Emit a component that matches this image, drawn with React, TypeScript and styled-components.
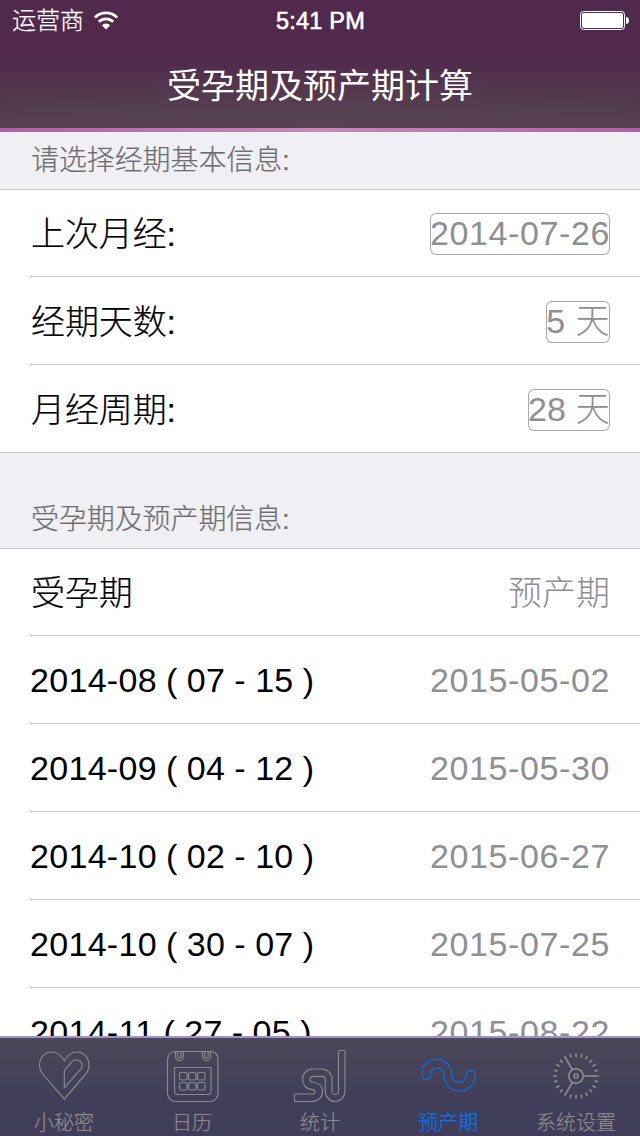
import type { ReactNode } from 'react'
import styled, { createGlobalStyle } from 'styled-components'

const GlobalStyle = createGlobalStyle`
    * {
        box-sizing: border-box;
    }

    body {
        margin: 0;
        background: #fff;
        font-family: 'Liberation Sans', 'Noto Sans CJK SC', sans-serif;
    }
`

const Screen = styled.div`
    width: 640px;
    height: 1136px;
    display: flex;
    flex-direction: column;
    overflow: hidden;
    background: #efeff4;
`

const Header = styled.header`
    flex: none;
    height: 128px;
    color: #fff;
    background:
        radial-gradient(ellipse 420px 60px at 50% 100%, rgba(92, 72, 82, 0.55), rgba(92, 72, 82, 0)),
        linear-gradient(#51294d 0%, #51294d 40%, #53404f 100%);
`

const Stripe = styled.div`
    flex: none;
    height: 4px;
    background: linear-gradient(90deg, #b05fa8, #c888bb 50%, #b05fa8);
`

const StatusBar = styled.div`
    height: 40px;
    padding: 0 11px 0 12px;
    display: grid;
    grid-template-columns: 1fr auto 1fr;
    align-items: center;
`

const Carrier = styled.div`
    display: flex;
    align-items: center;
    gap: 9px;
    font-size: 24px;
    font-weight: 300;
    line-height: 40px;
    -webkit-text-stroke: 0.25px #fff;
`

const Clock = styled.div`
    font-size: 23.5px;
    line-height: 40px;
    letter-spacing: 0.2px;
    padding-top: 1px;
    -webkit-text-stroke: 0.6px #fff;
`

const Battery = styled.svg`
    justify-self: end;
`

const Title = styled.h1`
    margin: 0;
    height: 88px;
    padding-top: 2px;
    font-size: 34px;
    font-weight: 400;
    line-height: 88px;
    text-align: center;
`

const List = styled.main`
    flex: 1;
    min-height: 0;
    overflow: hidden;
`

const SectionHeader = styled.h2<{ $height: number }>`
    margin: 0;
    height: ${({ $height }) => $height}px;
    padding: 0 31px 8px;
    display: flex;
    align-items: flex-end;
    border-bottom: 1px solid #c8c7cc;
    color: #6d6d72;
    font-size: 28px;
    font-weight: 300;
    line-height: 40px;
    letter-spacing: -0.1px;
    -webkit-text-stroke: 0.2px #6d6d72;
`

const Rows = styled.div`
    background: #fff;
    padding-left: 30px;
`

const Row = styled.div<{ $chinese?: boolean }>`
    height: 88px;
    padding-top: ${({ $chinese }) => ($chinese ? 2 : 0)}px;
    padding-right: 30px;
    display: flex;
    align-items: center;
    justify-content: space-between;
    border-bottom: 1px solid #c8c7cc;
    font-size: 34px;
    font-weight: 300;
    line-height: 40px;
    white-space: pre;

    &:first-child {
        height: 87px;
    }

    &:last-child {
        margin-left: -30px;
        padding-left: 30px;
    }
`

const Label = styled.span<{ $dates?: boolean }>`
    color: #000;
    padding-left: ${({ $dates }) => ($dates ? 0 : 1)}px;
    letter-spacing: ${({ $dates }) => ($dates ? '0.3px' : '-0.1px')};
    word-spacing: ${({ $dates }) => ($dates ? '-0.6px' : '0')};
    -webkit-text-stroke: ${({ $dates }) => ($dates ? '0' : '0.2px #000')};
`

const Value = styled.span<{ $tracking?: number }>`
    color: #8e8e93;
    letter-spacing: ${({ $tracking = 0.6 }) => $tracking}px;
`

// The outline is drawn inside the box so that it hugs the text
const Field = styled(Value)`
    height: 42px;
    border-radius: 6px;
    box-shadow: inset 0 0 0 1px #a9a9a9;
`

const TabBar = styled.nav`
    flex: none;
    height: 100px;
    display: flex;
    border-top: 2px solid #a093cc;
    background: linear-gradient(#4b4858 0%, #413e5a 60%, #403c5a 100%);
`

const TabItem = styled.div<{ $active?: boolean }>`
    flex: 1;
    padding-top: 8px;
    display: flex;
    flex-direction: column;
    align-items: center;
    gap: 4px;
    color: ${({ $active }) => ($active ? '#0a74f0' : '#8b898c')};
    font-size: 20px;
    font-weight: 300;
    line-height: 26px;
    -webkit-text-stroke: 0.25px currentColor;
`

const TabIcon = styled.svg`
    flex: none;
    width: 64px;
    height: 60px;
    fill: none;
    stroke: currentColor;
    stroke-width: 1.15;
`

const WifiIcon = () => (
    <svg width="26" height="20" viewBox="0 0 26 20" fill="none" stroke="#fff" strokeWidth="2.7">
        <path d="M1.8 6.6a15.8 15.8 0 0 1 22.4 0" />
        <path d="M5.8 10.8a10.1 10.1 0 0 1 14.4 0" />
        <path d="M13 18.5 8.8 14.3a6 6 0 0 1 8.4 0z" fill="#fff" stroke="none" />
    </svg>
)

const HeartIcon = () => (
    <TabIcon viewBox="0 0 64 60">
        <path d="M32.3 14.5C29 9 24.5 6 19.5 6 12.5 6 7.5 11.8 7.5 19c0 4 1.5 7 4 10l20.8 24L53 29c2.5-3 4-6 4-10 0-7.2-5-13-12-13-5 0-9.5 3-12.7 8.5Z" />
        <path d="M32.3 41.7v-17l7-8.3c3-3.5 7-3.3 9.2-.8 2 2.3 2 5.3 0 7.7Z" />
    </TabIcon>
)

const CalendarIcon = () => (
    <TabIcon viewBox="0 0 64 60">
        <path d="M15.5 5.5c-5 0-8 3.5-8 8.5v33c0 5 3.5 8.5 8.5 8.5h33.5c5 0 8.5-3.5 8.5-8.5V14c0-5-2.5-8.5-7.5-8.5M23.5 5.5h18.5" />
        {[15.5, 42.5].map((x) => (
            <g key={x}>
                <path d={`M${x} 5.5v5a4 4 0 0 0 8 0v-5z`} />
                <path d={`M${x + 2.3} 5.5v5a1.7 1.7 0 0 0 3.4 0v-5`} />
            </g>
        ))}
        <path d="M14.5 21.5h36.5v24a3 3 0 0 1-3 3H17.5a3 3 0 0 1-3-3z" />
        {[26.5, 36.5].map((y) =>
            [19.5, 28.5, 37.5].map((x) => <rect key={`${x}-${y}`} x={x} y={y} width="7.5" height="7.5" rx="1.5" />),
        )}
    </TabIcon>
)

const StatsIcon = () => (
    <TabIcon viewBox="0 0 64 60">
        <path d="M7.5 48h16.2c4.3 0 4.3-4.7 0-4.7-5.4 0-9.2-4.6-9.2-10 0-5.6 4.5-10.3 10.5-10.3h8.5C39.700 23 44 27.500 44 33.500v11.800c0 4.300 6.500 4.300 6.500 0V5.500q0-1 1-1h4.500q1 0 1 1v39.300c0 6-4.500 10.700-9.800 10.700s-9.900-4.500-9.900-10.500v-11c0-2.400-1.400-3.700-3.700-3.700h-8c-4.300 0-5.300 5.500-.9 6 5.600.5 9.800 3.700 9.800 9 0 5.700-4.500 10.200-10 10.200h-17q-1 0-1-1V49q0-1 1-1Z" />
    </TabIcon>
)

const WaveIcon = () => (
    <TabIcon viewBox="0 0 64 60">
        <path d="M5.7 28.5C5.7 20 12.5 13.3 21 13.3S36 20.5 36 29c0 4.2 3.2 7.4 7.3 7.4s7-3.2 7-7.4c0-2.7 1.9-4.700 4.500-4.700s4.600 2 4.600 4.700c0 9-7.200 16-16.100 16s-15-7-15-16c0-4-3.100-7-7-7s-7 3-7 7c0 2.900-1.800 4.700-4.300 4.700S5.700 31.500 5.700 28.500Z" />
    </TabIcon>
)

const DialIcon = () => (
    <TabIcon viewBox="0 0 64 60">
        <g strokeWidth="1.7">
            {Array.from({ length: 24 }, (_, i) => (
                <path
                    key={i}
                    d={`M${i % 8 === 0 ? 39.5 : 51} 30H54.8`}
                    transform={`rotate(${i * 15} 32 30)`}
                />
            ))}
        </g>
        <circle cx="32" cy="30" r="7.2" strokeWidth="1.7" />
        <circle cx="32" cy="30" r="2" strokeWidth="1.7" />
    </TabIcon>
)

const fields = [
    { label: '上次月经:', value: '2014-07-26', tracking: 0.6 },
    { label: '经期天数:', value: '5 天', tracking: 0.5 },
    { label: '月经周期:', value: '28 天', tracking: 0.2 },
]

const forecasts = [
    { label: '2014-08 ( 07 - 15 )', value: '2015-05-02' },
    { label: '2014-09 ( 04 - 12 )', value: '2015-05-30' },
    { label: '2014-10 ( 02 - 10 )', value: '2015-06-27' },
    { label: '2014-10 ( 30 - 07 )', value: '2015-07-25' },
    { label: '2014-11 ( 27 - 05 )', value: '2015-08-22' },
]

const tabs: { label: string; icon: ReactNode; active?: boolean }[] = [
    { label: '小秘密', icon: <HeartIcon /> },
    { label: '日历', icon: <CalendarIcon /> },
    { label: '统计', icon: <StatsIcon /> },
    { label: '预产期', icon: <WaveIcon />, active: true },
    { label: '系统设置', icon: <DialIcon /> },
]

const App = () => {
    return (
        <Screen>
            <GlobalStyle />
            <Header>
                <StatusBar>
                    <Carrier>
                        运营商
                        <WifiIcon />
                    </Carrier>
                    <Clock>5:41 PM</Clock>
                    <Battery width="49" height="19" viewBox="0 0 49 19">
                        <rect x="0.5" y="0.5" width="44" height="18" rx="3" fill="none" stroke="#fff" />
                        <rect x="2" y="2" width="41" height="15" rx="1.5" fill="#fff" />
                        <path d="M46 6c2 0 3 1.5 3 3.5S48 13 46 13z" fill="#fff" />
                    </Battery>
                </StatusBar>
                <Title>受孕期及预产期计算</Title>
            </Header>
            <Stripe />
            <List>
                <SectionHeader $height={58}>请选择经期基本信息:</SectionHeader>
                <Rows>
                    {fields.map(({ label, value, tracking }) => (
                        <Row key={label} $chinese>
                            <Label>{label}</Label>
                            <Field $tracking={tracking}>{value}</Field>
                        </Row>
                    ))}
                </Rows>
                <SectionHeader $height={96}>受孕期及预产期信息:</SectionHeader>
                <Rows>
                    <Row $chinese>
                        <Label>受孕期</Label>
                        <Value $tracking={0}>预产期</Value>
                    </Row>
                    {forecasts.map(({ label, value }) => (
                        <Row key={label}>
                            <Label $dates>{label}</Label>
                            <Value>{value}</Value>
                        </Row>
                    ))}
                </Rows>
            </List>
            <TabBar>
                {tabs.map(({ label, icon, active }) => (
                    <TabItem key={label} $active={active}>
                        {icon}
                        {label}
                    </TabItem>
                ))}
            </TabBar>
        </Screen>
    )
}

export default App
